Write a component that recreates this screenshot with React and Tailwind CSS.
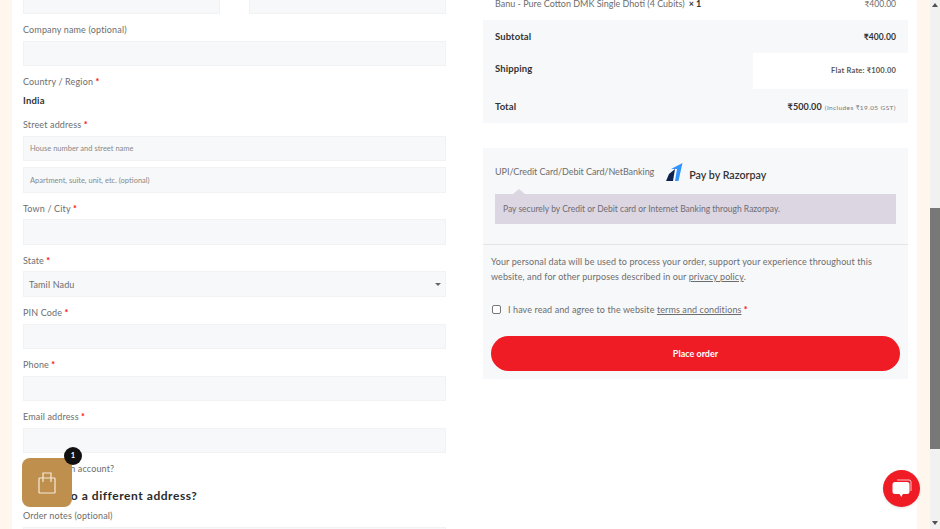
const font = "font-['Lato',sans-serif]";

const Req = () => <span className="text-[#ff0000] font-bold"> *</span>;

const Label = ({ children, req, className = "" }) => (
  <div className={`h-[16px] leading-[18px] text-[9px] tracking-[0.15px] text-[#6d6d6d] whitespace-nowrap ${className}`}>
    {children}
    {req && <Req />}
  </div>
);

const Input = ({ placeholder, className = "" }) => (
  <div className={`h-[25px] bg-[#f7f8fa] border border-[#f1f2f4] flex items-center pl-[6px] text-[7.5px] text-[#8a8a8a] ${className}`}>
    {placeholder}
  </div>
);

const Checkbox = ({ className = "" }) => (
  <div className={`w-[9px] h-[9px] shrink-0 border border-[#777777] rounded-[2px] bg-white ${className}`} />
);

const Scrollbar = () => (
  <div className="w-[10px] h-full bg-[#f1f1f1] flex flex-col items-center">
    <div className="h-[208px] w-full flex justify-center pt-[3px]">
      <div className="w-0 h-0 border-x-[3px] border-x-transparent border-b-[4px] border-b-[#505050]" />
    </div>
    <div className="h-[241px] w-full bg-[#787878]" />
    <div className="flex-1 w-full flex justify-center items-end pb-[4px]">
      <div className="w-0 h-0 border-x-[3px] border-x-transparent border-t-[4px] border-t-[#505050]" />
    </div>
  </div>
);

const BillingForm = () => (
  <div className="w-[423px] flex flex-col">
    <div className="flex justify-between">
      <div className="w-[197px] h-[14px] bg-[#f7f8fa] border-b border-x border-[#f1f2f4]" />
      <div className="w-[197px] h-[14px] bg-[#f7f8fa] border-b border-x border-[#f1f2f4]" />
    </div>
    <Label className="mt-[7px] mb-[4px]">Company name (optional)</Label>
    <Input />
    <Label className="mt-[7px]" req>Country / Region</Label>
    <div className="mt-[3px] h-[16px] leading-[18px] text-[9.5px] font-bold tracking-[0.2px] text-[#333333]">India</div>
    <Label className="mt-[8px] mb-[4px]" req>Street address</Label>
    <Input placeholder="House number and street name" />
    <Input placeholder="Apartment, suite, unit, etc. (optional)" className="mt-[6px] h-[26px] pt-[1px]" />
    <Label className="mt-[7px] mb-[3px]" req>Town / City</Label>
    <Input className="h-[26px]" />
    <Label className="mt-[7px] mb-[3px]" req>State</Label>
    <div className="h-[26px] bg-[#f7f8fa] border border-[#f1f2f4] flex items-center justify-between pl-[5px] pr-[4px] pt-[1px] text-[9px] tracking-[0.15px] text-[#6d6d6d]">
      Tamil Nadu
      <div className="w-0 h-0 border-x-[3px] border-x-transparent border-t-[3px] border-t-[#666666]" />
    </div>
    <Label className="mt-[7px] mb-[4px]" req>PIN Code</Label>
    <Input />
    <Label className="mt-[7px] mb-[4px]" req>Phone</Label>
    <Input />
    <Label className="mt-[7px] mb-[4px]" req>Email address</Label>
    <Input />
    <div className="mt-[7px] flex items-center">
      <Checkbox />
      <Label className="ml-[4px]">Create an account?</Label>
    </div>
    <div className="mt-[11px] h-[18px] flex items-center">
      <Checkbox />
      <span className="ml-[5px] leading-[18px] text-[12px] font-bold tracking-[0.55px] text-[#2b2b2b] whitespace-nowrap">
        Ship to a different address?
      </span>
    </div>
    <Label className="mt-[2px] mb-[4px]">Order notes (optional)</Label>
    <div className="h-[20px] bg-[#f7f8fa] border border-[#f1f2f4]" />
  </div>
);

const TotalRow = ({ label, children, className = "", labelClass = "" }) => (
  <div className={`flex items-center justify-between text-[9.5px] font-bold tracking-[0.1px] text-[#333333] ${className}`}>
    <span className={`pl-[12px] ${labelClass}`}>{label}</span>
    {children}
  </div>
);

const RazorpayLogo = () => (
  <svg width="17" height="19" viewBox="0 0 17 19">
    <polygon points="0,18 3,11 9,6 7,18" fill="#0f2350" />
    <polygon points="5,6 16.5,0 12.5,18 9,18 11,6" fill="#3395ff" />
  </svg>
);

const OrderSummary = () => (
  <div className="w-[425px] flex flex-col">
    <div className="h-[20px] flex justify-between px-[12px] text-[9px] text-[#6d6d6d] leading-[8px] whitespace-nowrap">
      <span>
        Banu - Pure Cotton DMK Single Dhoti (4 Cubits)
        <strong className="text-[#333333] ml-[4px]">× 1</strong>
      </span>
      <span className="text-[8.5px]">₹400.00</span>
    </div>
    <div className="bg-[#f7f8fa] flex flex-col">
      <TotalRow label="Subtotal" className="h-[33px]" labelClass="mt-[1px]">
        <span className="pr-[12px] mt-[1px] text-[8.5px]">₹400.00</span>
      </TotalRow>
      <TotalRow label="Shipping" className="h-[36px]" labelClass="mt-[-3px]">
        <div className="w-[155px] h-full bg-white flex items-center justify-end pr-[12px] font-bold text-[7.5px] tracking-[0.2px] text-[#555555]">
          Flat Rate: ₹100.00
        </div>
      </TotalRow>
      <TotalRow label="Total" className="h-[34px]" labelClass="mt-[2px]">
        <span className="pr-[12px] mt-[2px] text-[9px] flex items-baseline gap-[3px]">
          ₹500.00
          <span className="font-normal text-[6.5px] text-[#777777] tracking-[0.4px]">(Includes ₹19.05 GST)</span>
        </span>
      </TotalRow>
    </div>

    <div className="mt-[25px] h-[231px] bg-[#f7f8fa] flex flex-col">
      <div className="h-[46px] pl-[12px] flex items-center text-[9px] tracking-[-0.05px] text-[#6d6d6d] whitespace-nowrap">
        <span className="mt-[2px]">UPI/Credit Card/Debit Card/NetBanking</span>
        <div className="ml-[12px] mt-[2px]"><RazorpayLogo /></div>
        <span className="ml-[6px] mt-[9px] font-semibold text-[10.7px] tracking-normal text-[#333333]">Pay by Razorpay</span>
      </div>
      <div className="relative mx-[12px] h-[30px] bg-[#dcd6e2] flex items-center pl-[8px] text-[8.5px] text-[#6d6d75]">
        <div className="absolute left-[18px] top-[-5px] w-0 h-0 border-x-[6px] border-x-transparent border-b-[5px] border-b-[#dcd6e2]" />
        Pay securely by Credit or Debit card or Internet Banking through Razorpay.
      </div>
      <div className="mt-[20px] border-t border-[#e3e4e7] pt-[9px] pl-[8px] pr-[20px] text-[9px] tracking-[0.1px] leading-[15px] text-[#6d6d6d]">
        Your personal data will be used to process your order, support your experience throughout this website, and for other purposes described in our <span className="underline">privacy policy</span>.
      </div>
      <div className="mt-[19px] pl-[9px] flex items-center text-[9px] tracking-[0.1px] text-[#6d6d6d] whitespace-nowrap">
        <Checkbox />
        <span className="ml-[7px]">I have read and agree to the website <span className="underline">terms and conditions</span><Req /></span>
      </div>
      <button className="mt-[19px] mx-[8px] h-[35px] pt-[1px] rounded-full bg-[#ef1c25] text-white text-[9px] font-bold">
        Place order
      </button>
    </div>
  </div>
);

const FloatingCart = () => (
  <div className="absolute left-[22px] top-[458px] w-[50px] h-[49px] rounded-[8px] bg-[#bf8f4e] flex items-center justify-center">
    <svg width="18" height="22" viewBox="0 0 18 22" fill="none" stroke="#f6ead9" strokeWidth="1.2">
      <rect x="1" y="6" width="16" height="15" rx="0.5" />
      <path d="M5 10 V1 H13 V10" />
    </svg>
    <div className="absolute right-[-10px] top-[-11px] w-[18px] h-[18px] rounded-full bg-[#111111] text-white text-[7.5px] font-bold flex items-center justify-center">1</div>
  </div>
);

const ChatButton = () => (
  <div className="absolute left-[883px] top-[470px] w-[37px] h-[37px] rounded-full bg-[#ef1c25] shadow-sm flex items-center justify-center">
    <svg width="20" height="20" viewBox="0 0 20 20">
      <path d="M5 1 H17 a2 2 0 0 1 2 2 V12" fill="none" stroke="#ffffff" strokeOpacity="0.75" strokeWidth="1" />
      <path d="M3 3 H15 a2.5 2.5 0 0 1 2.5 2.5 V12.5 a2.5 2.5 0 0 1 -2.5 2.5 H11 L9.2 18 L7.5 15 H3 a2.5 2.5 0 0 1 -2.5 -2.5 V5.5 A2.5 2.5 0 0 1 3 3 Z" fill="#ffffff" />
    </svg>
  </div>
);

export default function App() {
  return (
    <div className={`relative w-[940px] h-[529px] overflow-hidden flex bg-[#fff7ee] ${font}`}>
      <div className="w-[930px] h-full flex pl-[12px] pr-[13px]">
        <div className="w-[905px] h-full bg-white flex items-start pl-[11px]">
          <BillingForm />
          <div className="ml-[37px]">
            <OrderSummary />
          </div>
        </div>
      </div>
      <Scrollbar />
      <FloatingCart />
      <ChatButton />
    </div>
  );
}
